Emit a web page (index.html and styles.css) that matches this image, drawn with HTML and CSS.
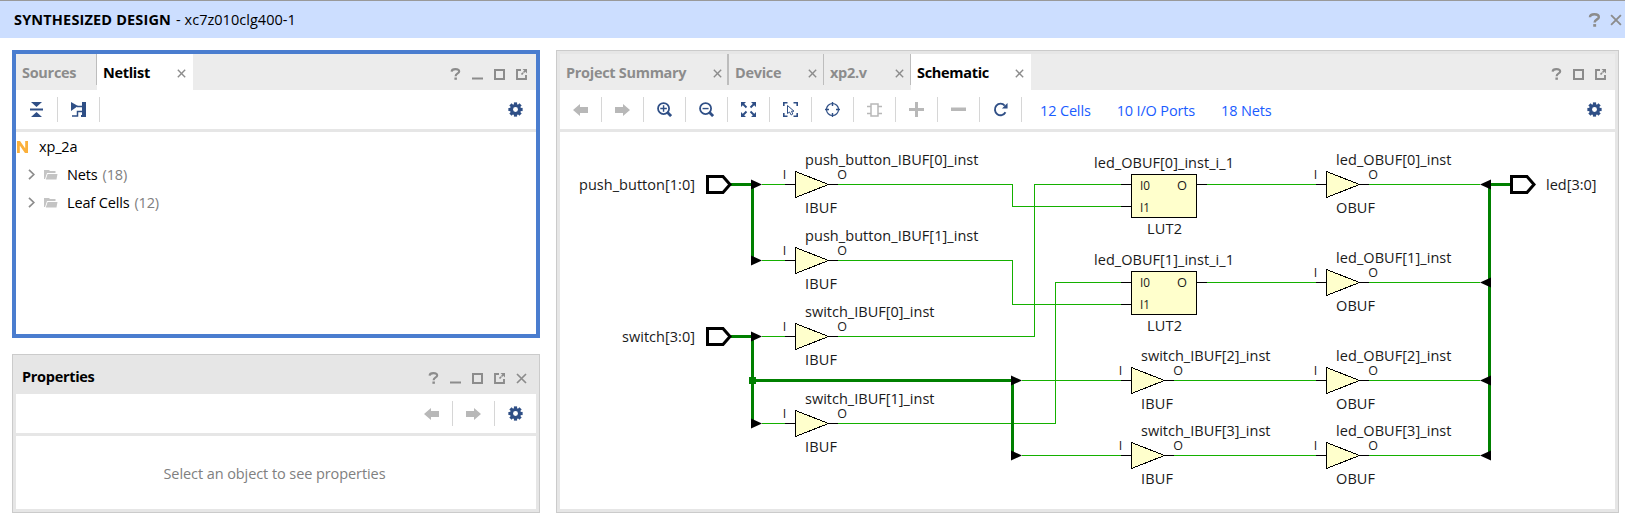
FILE: index.html
```html
<!DOCTYPE html>
<html lang="en">
<head>
<meta charset="utf-8">
<title>Synthesized Design</title>
<link rel="stylesheet" href="styles.css">
</head>
<body>
<svg class="defs" width="0" height="0" aria-hidden="true">
  <symbol id="close" viewBox="0 0 11 11"><path d="M1 1L10 10M10 1L1 10" fill="none" stroke="currentColor" stroke-width="1.7"/></symbol>
  <symbol id="help" viewBox="0 0 11 12"><path d="M1.600 3.600C1.700 1.800 3.200 1.100 5.400 1.100C7.800 1.100 9.200 2 9.200 3.600C9.200 5.600 5.600 5.400 5.600 8.200" fill="none" stroke="currentColor" stroke-width="2.100"/><path d="M4.400 9.500h2.500v2.300H4.400z" fill="currentColor"/></symbol>
  <symbol id="min" viewBox="0 0 11 11"><path d="M0 8.500h11v2H0z" fill="currentColor"/></symbol>
  <symbol id="max" viewBox="0 0 11 11"><path d="M1 1h9v9H1z" fill="none" stroke="currentColor" stroke-width="2"/></symbol>
  <symbol id="pop" viewBox="0 0 11 11"><path d="M5 1H1v9h9V6" fill="none" stroke="currentColor" stroke-width="1.900"/><path d="M5.500 5.500L9 2" stroke="currentColor" stroke-width="1.700" stroke-dasharray="2.200 .600"/><path d="M6.500 0H11v4.500z" fill="currentColor"/></symbol>
  <symbol id="gear" viewBox="-8 -8 16 16"><g fill="currentColor"><path id="tooth" d="M-1.700 -7.600h3.400v15.200h-3.400z"/><use href="#tooth" transform="rotate(45)"/><use href="#tooth" transform="rotate(90)"/><use href="#tooth" transform="rotate(135)"/><circle r="5.900"/></g><circle r="2.600" fill="#fff"/></symbol>
  <symbol id="back" viewBox="0 0 15 12"><path d="M0 6L7 0V3H15V9H7V12z" fill="currentColor"/></symbol>
  <symbol id="fwd" viewBox="0 0 15 12"><path d="M15 6L8 0V3H0V9H8V12z" fill="currentColor"/></symbol>
  <symbol id="chev" viewBox="0 0 7 11"><path d="M1 .8L5.800 5.500L1 10.200" fill="none" stroke="currentColor" stroke-width="1.700"/></symbol>
  <symbol id="folder" viewBox="0 0 14 11"><path d="M0 10V1H5L6 2H11.500V4H3L1 10z" fill="currentColor"/><path d="M3.600 5H13.500L12.500 10.500H1.800z" fill="currentColor"/></symbol>
</svg>

<header class="titlebar">
  <h1 class="title">SYNTHESIZED DESIGN</h1><span class="part">- xc7z010clg400-1</span>
  <div class="titlebar-tools"><svg width="13" height="14"><use href="#help"/></svg><svg width="12" height="12"><use href="#close"/></svg></div>
</header>

<main class="workspace">
  <div class="side">
    <section class="panel focused">
      <div class="tabs">
        <div class="tab t-sources"><span>Sources</span></div>
        <div class="tab active t-netlist"><span>Netlist</span><svg class="x" width="9" height="9"><use href="#close"/></svg></div>
        <div class="wintools"><svg width="11" height="12"><use href="#help"/></svg><svg width="11" height="11"><use href="#min"/></svg><svg width="11" height="11"><use href="#max"/></svg><svg width="11" height="11"><use href="#pop"/></svg></div>
      </div>
      <div class="toolbar">
        <div class="tool"><svg width="13" height="15" viewBox="0 0 13 15"><path d="M1 0H12L6.500 5zM0 6.500H13V8.500H0zM1 15H12L6.500 10z" fill="currentColor"/></svg></div>
        <div class="tool"><svg width="15" height="15" viewBox="0 0 15 15"><path d="M0 0L7 4L0 9zM11 0H15V15H10V13H11z" fill="currentColor"/><path d="M6 4.500H11M1 14H6.500V9.500H11" fill="none" stroke="currentColor" stroke-width="1.500"/></svg></div>
        <svg class="gear" width="15" height="15"><use href="#gear"/></svg>
      </div>
      <div class="tree">
        <div class="row root"><svg width="11" height="12" viewBox="0 0 11 12"><path d="M1.400 12V1.500H2.300L8.700 10.500H9.600V0" fill="none" stroke="#fbb03b" stroke-width="2.800"/></svg><span>xp_2a</span></div>
        <div class="row"><svg class="chev" width="7" height="11"><use href="#chev"/></svg><svg class="folder" width="14" height="11"><use href="#folder"/></svg><span class="name">Nets</span><span class="count">(18)</span></div>
        <div class="row"><svg class="chev" width="7" height="11"><use href="#chev"/></svg><svg class="folder" width="14" height="11"><use href="#folder"/></svg><span class="name">Leaf Cells</span><span class="count">(12)</span></div>
      </div>
    </section>

    <section class="panel props">
      <div class="props-head"><h2>Properties</h2>
        <div class="wintools"><svg width="11" height="12"><use href="#help"/></svg><svg width="11" height="11"><use href="#min"/></svg><svg width="11" height="11"><use href="#max"/></svg><svg width="11" height="11"><use href="#pop"/></svg><svg width="11" height="11"><use href="#close"/></svg></div>
      </div>
      <div class="toolbar right">
        <div class="tool off"><svg width="15" height="12"><use href="#back"/></svg></div>
        <div class="tool off"><svg width="15" height="12"><use href="#fwd"/></svg></div>
        <svg class="gear" width="15" height="15"><use href="#gear"/></svg>
      </div>
      <div class="empty"><span>Select an object to see properties</span></div>
    </section>
  </div>

  <section class="panel main">
    <div class="tabs">
      <div class="tab t-summary"><span>Project Summary</span><svg class="x" width="9" height="9"><use href="#close"/></svg></div>
      <div class="tab t-device"><span>Device</span><svg class="x" width="9" height="9"><use href="#close"/></svg></div>
      <div class="tab t-xp2"><span>xp2.v</span><svg class="x" width="9" height="9"><use href="#close"/></svg></div>
      <div class="tab active t-schem"><span>Schematic</span><svg class="x" width="9" height="9"><use href="#close"/></svg></div>
      <div class="wintools"><svg width="11" height="12"><use href="#help"/></svg><svg width="11" height="11"><use href="#max"/></svg><svg width="11" height="11"><use href="#pop"/></svg></div>
    </div>
    <div class="toolbar">
      <div class="tool off"><svg width="15" height="12"><use href="#back"/></svg></div>
      <div class="tool off"><svg width="15" height="12"><use href="#fwd"/></svg></div>
      <div class="tool"><svg width="15" height="15" viewBox="0 0 16 16"><g fill="none" stroke="currentColor"><circle cx="7" cy="7" r="5.900" stroke-width="1.900"/><path d="M11 11L15 15" stroke-width="3"/><path d="M3.500 7H10.500M7 3.500V10.500" stroke-width="1.500"/></g></svg></div>
      <div class="tool"><svg width="15" height="15" viewBox="0 0 16 16"><g fill="none" stroke="currentColor"><circle cx="7" cy="7" r="5.900" stroke-width="1.900"/><path d="M11 11L15 15" stroke-width="3"/><path d="M3.800 7H10.200" stroke-width="1.500"/></g></svg></div>
      <div class="tool"><svg width="15" height="15" viewBox="0 0 15 15"><path d="M0 0H5L0 5zM15 0V5L10 0zM0 15V10L5 15zM15 15H10L15 10z" fill="currentColor"/><path d="M1 1L5.500 5.500M14 1L9.500 5.500M1 14L5.500 9.500M14 14L9.500 9.500" stroke="currentColor" stroke-width="1.900"/></svg></div>
      <div class="tool"><svg width="15" height="15" viewBox="0 0 15 15"><g fill="none" stroke="currentColor"><path d="M.800 4V.800H4.500M10.500 .800H14.200V4M.800 11V14.200H4.500M10.500 14.200H14.200V11" stroke-width="1.600"/><path d="M4.500 3.500V11.500L6.500 10L8.200 13L9.800 12L8.500 9.200H11z" stroke-width="1"/></g></svg></div>
      <div class="tool"><svg width="15" height="15" viewBox="0 0 15 15"><g fill="none" stroke="currentColor"><circle cx="7.500" cy="7.500" r="6" stroke-width="1.200"/><path d="M7.500 0V4M7.500 11V15M0 7.500H4M11 7.500H15" stroke-width="1.400"/></g></svg></div>
      <div class="tool off"><svg width="15" height="14" viewBox="0 0 15 14"><path d="M4 1H11V13H4zM0 3.500H4M0 10.500H4M11 3.500H15M11 10.500H15" fill="none" stroke="currentColor" stroke-width="1.500"/></svg></div>
      <div class="tool off"><svg width="15" height="15" viewBox="0 0 15 15"><path d="M6 0H9V6H15V9H9V15H6V9H0V6H6z" fill="currentColor"/></svg></div>
      <div class="tool off"><svg width="15" height="15" viewBox="0 0 15 15"><path d="M0 5.500H15V9H0z" fill="currentColor"/></svg></div>
      <div class="tool"><svg width="15" height="15" viewBox="0 0 16 15"><path d="M12.500 3.300A6 6.200 0 1 0 13.300 10.500" fill="none" stroke="currentColor" stroke-width="2"/><path d="M15.500 .500V6.300H9.500z" fill="currentColor"/></svg></div>
      <nav class="links"><a>12 Cells</a><a>10 I/O Ports</a><a>18 Nets</a></nav>
      <svg class="gear" width="15" height="15"><use href="#gear"/></svg>
    </div>

    <svg class="schematic" width="1055" height="377" viewBox="560 132 1055 377">
      <defs>
        <g id="buf">
          <path class="pin" d="M-10 0H0M33 0H43"/>
          <path class="cell" d="M.5 -13L33.500 0L.5 13z"/>
          <text class="s" x="-10.500" y="-6" text-anchor="middle">I</text>
          <text class="s" x="47" y="-5.500" text-anchor="middle">O</text>
        </g>
        <path id="tapR" class="tap" d="M-1.500 -5V5L9.500 0z"/>
        <path id="tapL" class="tap" d="M1.500 -5V5L-9.500 0z"/>
        <path id="port" class="port" d="M1.500 -8H17L24 0L17 8H1.500z"/>
        <g id="lut">
          <path class="cell" d="M.5 .5H65.500V43.500H.5z"/>
          <text class="s" x="9" y="15.500" textLength="10" lengthAdjust="spacingAndGlyphs">I0</text>
          <text class="s" x="46" y="15.500" textLength="10" lengthAdjust="spacingAndGlyphs">O</text>
          <text class="s" x="9" y="37.500" textLength="10" lengthAdjust="spacingAndGlyphs">I1</text>
        </g>
      </defs>

      <g class="wire">
        <path d="M762 184.500H1012.500V206.500H1121"/>
        <path d="M762 260.500H1012.500V304.500H1121"/>
        <path d="M762 336.500H1034.500V184.500H1121"/>
        <path d="M762 423.500H1055.500V282.500H1121"/>
        <path d="M1207 184.500H1480M1207 282.500H1480"/>
        <path d="M1022 380.500H1480M1022 455.500H1480"/>
      </g>
      <g class="bus">
        <path d="M730 184.500H752.500V260.500"/>
        <path d="M730 336.500H752.500V423.500M752.500 380.500H1012.500V455.500"/>
        <path d="M1511 184.500H1489.500V455.500"/>
      </g>
      <path class="joint" d="M749 377H756V384H749z"/>

      <use href="#port" x="706" y="184.500"/><use href="#port" x="706" y="336.500"/><use href="#port" x="1510" y="184.500"/>
      <use href="#tapR" x="752.500" y="184.500"/><use href="#tapR" x="752.500" y="260.500"/><use href="#tapR" x="752.500" y="336.500"/><use href="#tapR" x="752.500" y="423.500"/>
      <use href="#tapR" x="1012.500" y="380.500"/><use href="#tapR" x="1012.500" y="455.500"/>
      <use href="#tapL" x="1489.500" y="184.500"/><use href="#tapL" x="1489.500" y="282.500"/><use href="#tapL" x="1489.500" y="380.500"/><use href="#tapL" x="1489.500" y="455.500"/>

      <use href="#buf" x="795" y="184.500"/><use href="#buf" x="795" y="260.500"/><use href="#buf" x="795" y="336.500"/><use href="#buf" x="795" y="423.500"/>
      <use href="#buf" x="1131" y="380.500"/><use href="#buf" x="1131" y="455.500"/>
      <use href="#buf" x="1326" y="184.500"/><use href="#buf" x="1326" y="282.500"/><use href="#buf" x="1326" y="380.500"/><use href="#buf" x="1326" y="455.500"/>

      <path class="pin" d="M1121 184.500H1131M1121 206.500H1131M1197 184.500H1207M1121 282.500H1131M1121 304.500H1131M1197 282.500H1207"/>
      <use href="#lut" x="1131" y="174"/><use href="#lut" x="1131" y="271"/>

      <g class="m">
        <text x="579" y="190" textLength="116">push_button[1:0]</text>
        <text x="622" y="342" textLength="73">switch[3:0]</text>
        <text x="1546" y="190" textLength="50.500">led[3:0]</text>

        <text x="805" y="165" textLength="173.500">push_button_IBUF[0]_inst</text><text x="805" y="212.500" textLength="32">IBUF</text>
        <text x="805" y="241" textLength="173.500">push_button_IBUF[1]_inst</text><text x="805" y="288.500" textLength="32">IBUF</text>
        <text x="805" y="317" textLength="129.500">switch_IBUF[0]_inst</text><text x="805" y="364.500" textLength="32">IBUF</text>
        <text x="805" y="404" textLength="129.500">switch_IBUF[1]_inst</text><text x="805" y="451.500" textLength="32">IBUF</text>
        <text x="1141" y="361" textLength="129.500">switch_IBUF[2]_inst</text><text x="1141" y="408.500" textLength="32">IBUF</text>
        <text x="1141" y="436" textLength="129.500">switch_IBUF[3]_inst</text><text x="1141" y="483.500" textLength="32">IBUF</text>
        <text x="1094" y="168" textLength="140">led_OBUF[0]_inst_i_1</text><text x="1147" y="234" textLength="35">LUT2</text>
        <text x="1094" y="265" textLength="140">led_OBUF[1]_inst_i_1</text><text x="1147" y="331" textLength="35">LUT2</text>
        <text x="1336" y="165" textLength="115.500">led_OBUF[0]_inst</text><text x="1336" y="212.500" textLength="39">OBUF</text>
        <text x="1336" y="263" textLength="115.500">led_OBUF[1]_inst</text><text x="1336" y="310.500" textLength="39">OBUF</text>
        <text x="1336" y="361" textLength="115.500">led_OBUF[2]_inst</text><text x="1336" y="408.500" textLength="39">OBUF</text>
        <text x="1336" y="436" textLength="115.500">led_OBUF[3]_inst</text><text x="1336" y="483.500" textLength="39">OBUF</text>
      </g>
    </svg>
  </section>
</main>
</body>
</html>
```
FILE: styles.css
```css
* { box-sizing: border-box; }
body {
  margin: 0;
  width: 1625px;
  height: 524px;
  overflow: hidden;
  background: #fff;
  color: #000;
  font: 14.5px/20px "Open Sans", "Noto Sans", sans-serif;
  letter-spacing: -0.15px;
  white-space: nowrap;
}
svg { display: block; flex: none; }
.defs { display: none; }
h1, h2 { margin: 0; font-size: inherit; font-weight: 700; }

.titlebar {
  height: 38px;
  display: flex;
  align-items: center;
  padding: 1px 3px 0 14px;
  border-top: 1px solid #999;
  background: #ccdeff;
}
.title { letter-spacing: 0.16px; }
.part { margin-left: 5px; letter-spacing: 0.03px; }
.titlebar-tools {
  display: flex;
  align-items: center;
  gap: 9px;
  margin-left: auto;
  color: #8c8c8c;
}

.workspace { display: flex; gap: 16px; padding: 12px 6px 0 12px; }
.side { display: flex; flex-direction: column; gap: 16px; width: 528px; }
.panel {
  position: relative;
  border: 1px solid #cbcbcb;
  padding: 3px;
  background: #e6e6e6;
}
.panel.focused { height: 288px; padding: 0; border: 4px solid #4a7dcf; background: #fff; }
.panel.props { height: 159px; display: flex; flex-direction: column; }
.panel.main { width: 1063px; height: 463px; }

.tabs { display: flex; height: 36px; background: #ececec; }
.tab {
  position: relative;
  display: flex;
  align-items: center;
  justify-content: space-between;
  padding: 1px 7px 0 6px;
  color: #8c8c8c;
  font-weight: 700;
  letter-spacing: -0.3px;
}
.tab:not(.active)::after {
  content: "";
  position: absolute;
  right: 0;
  top: 0;
  width: 1px;
  height: 31px;
  background: #bdbdbd;
}
.tab.active { background: #fff; color: #000; }
.tab .x { color: #8c8c8c; margin-top: 1px; }
.t-sources { width: 81px; }
.t-netlist { width: 96px; }
.t-summary { width: 169px; }
.tab.t-summary::after { width: 2px; }
.t-device { width: 95px; }
.t-xp2 { width: 87px; }
.t-schem { width: 120px; }
.wintools {
  display: flex;
  align-items: center;
  gap: 11px;
  margin-left: auto;
  padding: 4px 9px 0 0;
  color: #8c8c8c;
}

.toolbar {
  display: flex;
  align-items: center;
  height: 42px;
  border-bottom: 3px solid #e6e6e6;
  background: #fff;
  color: #2f4f86;
}
.tool {
  width: 42px;
  height: 25px;
  display: flex;
  align-items: center;
  justify-content: center;
  border-right: 1px solid #d6d6d6;
}
.off { color: #b8b8b8; }
.gear { margin-left: auto; margin-right: 13px; }
.toolbar.right { justify-content: flex-end; }
.toolbar.right .gear { margin-left: 13px; }

.row { display: flex; align-items: center; height: 28px; padding: 1px 0 0 12px; }
.row.root { padding-left: 1px; }
.root span { margin-left: 11px; }
.row span { padding-top: 1px; }
.row.root span { padding-top: 0; }
.chev { color: #8c8c8c; }
.folder { margin-left: 9px; color: #c4c4c4; }
.name { margin-left: 9px; }
.count { margin-left: 5px; color: #808080; }

.props-head { display: flex; height: 36px; padding-left: 6px; }
.props-head h2 { padding-top: 9px; letter-spacing: -0.3px; }
.empty {
  flex: 1;
  display: flex;
  align-items: center;
  justify-content: center;
  padding: 2px 3px 0 0;
  background: #fff;
  color: #808080;
  letter-spacing: -0.08px;
}

.links { display: flex; gap: 26px; margin-left: 18px; padding-top: 2px; color: #1a5cff; }
.schematic { background: #fff; }
.wire { fill: none; stroke: #14b000; shape-rendering: crispEdges; }
.bus { fill: none; stroke: #008000; stroke-width: 3; shape-rendering: crispEdges; }
.joint { fill: #008000; }
.pin { fill: none; stroke: #000; shape-rendering: crispEdges; }
.cell { fill: #ffffcc; stroke: #000; shape-rendering: crispEdges; }
.tap { fill: #000; }
.port { fill: #fff; stroke: #000; stroke-width: 3; }
.schematic text { fill: #1a1a1a; letter-spacing: 0; }
.s { font-size: 12.500px; }
.m { font-size: 14.500px; }
```
